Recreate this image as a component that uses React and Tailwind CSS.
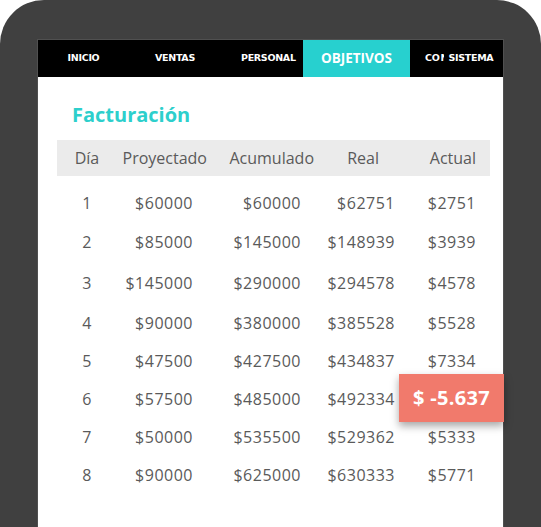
import React from "react";

const rows = [
  ["1", "$60000", "$60000", "$62751", "$2751", "h-[39px]"],
  ["2", "$85000", "$145000", "$148939", "$3939", "h-[40px]"],
  ["3", "$145000", "$290000", "$294578", "$4578", "h-[41px]"],
  ["4", "$90000", "$380000", "$385528", "$5528", "h-[39px]"],
  ["5", "$47500", "$427500", "$434837", "$7334", "h-[38px]"],
  ["6", "$57500", "$485000", "$492334", "", "h-[38px]"],
  ["7", "$50000", "$535500", "$529362", "$5333", "h-[37px]"],
  ["8", "$90000", "$625000", "$630333", "$5771", "h-[39px]"],
];

const cols = "grid grid-cols-[60px_98px_105px_80px_90px]";

export default function App() {
  return (
    <div className="h-[527px] w-[541px] overflow-hidden bg-white">
      <div className="h-[600px] w-[541px] rounded-t-[44px] bg-[#404040] pt-[39px] px-[37px]">
        <div className="relative h-[560px] border border-[#505050] bg-white">
          {/* nav */}
          <div
            className="flex h-[37px] items-center bg-black text-white"
            style={{ fontFamily: "'DejaVu Sans', sans-serif" }}
          >
            <div className="flex h-full w-[91px] items-center justify-center text-[9.5px] font-bold tracking-[-0.3px]">
              INICIO
            </div>
            <div className="flex h-full w-[92px] items-center justify-center text-[9.5px] font-bold tracking-[-0.3px]">
              VENTAS
            </div>
            <div className="flex h-full w-[82px] items-center pl-[20px] text-[9.5px] font-bold tracking-[-0.3px]">
              PERSONAL
            </div>
            <div
              className="flex h-full w-[107px] items-center justify-center bg-[#27d0cf] text-[13.5px] font-bold"
              style={{ fontFamily: "'Open Sans', sans-serif" }}
            >
              OBJETIVOS
            </div>
            <div className="flex h-full w-[93px] items-center pl-[15px] text-[9.5px] font-bold tracking-[-0.3px] whitespace-nowrap">
              <span>CO</span>
              <span className="ml-[1px] inline-block w-[4px] overflow-hidden">N</span>
              <span className="ml-[4px]">SISTEMA</span>
            </div>
          </div>

          <div style={{ fontFamily: "'Open Sans', sans-serif" }}>
            <h1 className="mt-[24px] ml-[34px] text-[20px] leading-[28px] font-bold text-[#2dcfcc]">
              Facturación
            </h1>
            <div className="mt-[11px] ml-[19px] w-[433px] text-[16px] text-[#5a5a5a]">
              <div className={`${cols} h-[36px] items-center bg-[#ebebeb]`}>
                <div className="text-center">Día</div>
                <div className="pr-[8px] text-right">Proyectado</div>
                <div className="pr-[6px] text-right">Acumulado</div>
                <div className="pr-[21px] text-right">Real</div>
                <div className="pr-[14px] text-right">Actual</div>
              </div>
              <div className="h-[7px]" />
              {rows.map((r) => (
                <div key={r[0]} className={`${cols} ${r[5]} items-center tracking-[0.5px]`}>
                  <div className="text-center">{r[0]}</div>
                  <div className="pr-[22px] text-right">{r[1]}</div>
                  <div className="pr-[19px] text-right">{r[2]}</div>
                  <div className="pr-[5px] text-right">{r[3]}</div>
                  <div className="pr-[14px] text-right">{r[4]}</div>
                </div>
              ))}
            </div>
          </div>

          <div
            className="absolute top-[334px] right-[-1px] flex h-[48px] w-[105px] items-center justify-center bg-[#f17a6c] text-[20px] font-bold tracking-[0.3px] text-white shadow-[0_4px_8px_rgba(0,0,0,0.35)]"
            style={{ fontFamily: "'Open Sans', sans-serif" }}
          >
            $ -5.637
          </div>
        </div>
      </div>
    </div>
  );
}
